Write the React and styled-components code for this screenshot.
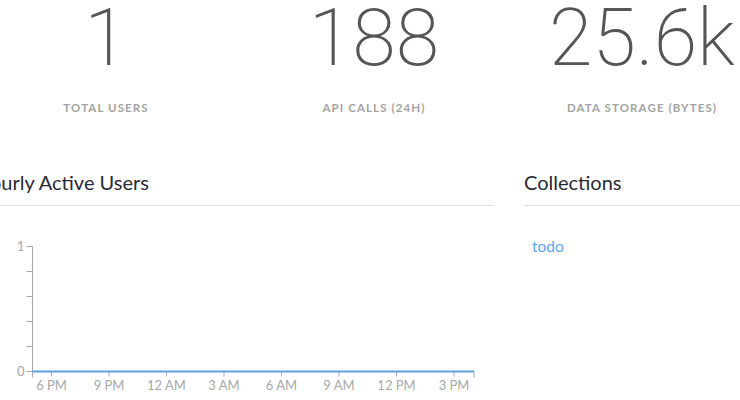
import React from 'react';
import styled, { createGlobalStyle } from 'styled-components';

const GlobalStyle = createGlobalStyle`
  html, body {
    margin: 0;
    padding: 0;
    background: #fff;
    overflow: hidden;
  }
  body {
    font-family: Lato, "Open Sans", Arial, sans-serif;
  }
`;

const Page = styled.div`
  width: 804px;
  margin-left: -28px;
`;

const StatsRow = styled.div`
  display: grid;
  grid-template-columns: repeat(3, 268px);
`;

const Stat = styled.div`
  text-align: center;
`;

const StatValue = styled.div`
  font-family: Roboto, "Open Sans", sans-serif;
  font-weight: 200;
  font-size: 79px;
  line-height: 76px;
  color: #555;
  white-space: nowrap;
`;

const StatLabel = styled.div`
  margin-top: 24px;
  font-size: 11.5px;
  line-height: 16px;
  font-weight: 700;
  letter-spacing: 1.1px;
  color: #a3a3a3;
  text-transform: uppercase;
`;

const Lower = styled.div`
  display: grid;
  grid-template-columns: 519px 252px;
  column-gap: 30px;
  margin: 54px 0 0 3px;
`;

const Panel = styled.section``;

const PanelTitle = styled.h2`
  margin: 0;
  padding: 0 0 11px;
  font-size: 20px;
  line-height: 24px;
  font-weight: 400;
  color: #2a2a36;
  border-bottom: 1px solid #dedede;
  white-space: nowrap;
`;

const CollectionList = styled.ul`
  list-style: none;
  margin: 30px 0 0;
  padding: 0 0 0 8px;
`;

const CollectionLink = styled.a`
  display: block;
  font-size: 15.5px;
  line-height: 20px;
  color: #5aa6f5;
  text-decoration: none;
`;

const ChartSvg = styled.svg`
  display: block;
  font-family: Lato, Arial, sans-serif;
`;

const hours = ['6 PM', '9 PM', '12 AM', '3 AM', '6 AM', '9 AM', '12 PM', '3 PM'];

const stats = [
  { value: '1', label: 'Total users' },
  { value: '188', label: 'API calls (24h)' },
  { value: '25.6k', label: 'Data storage (bytes)' },
];

function ActiveUsersChart() {
  const x0 = 57.5;
  const x1 = 499;
  const firstTick = 76.5;
  const step = 57.5;
  const yTop = 40.5;
  const yBottom = 165.5;
  const yTicks = [0, 1, 2, 3, 4, 5].map((i) => yTop + i * 25);
  return (
    <ChartSvg width="519" height="194" viewBox="0 0 519 194">
      <g stroke="#a9a9a9" strokeWidth="1" fill="none">
        <line x1={x0} y1={yTop} x2={x0} y2={yBottom} />
        {yTicks.map((y) => (
          <line key={y} x1={x0 - 6} y1={y} x2={x0} y2={y} />
        ))}
        <line x1={x0} y1={yBottom} x2={x0} y2={yBottom + 6} />
        {hours.map((h, i) => (
          <line key={h} x1={firstTick + i * step} y1={yBottom} x2={firstTick + i * step} y2={yBottom + 5} />
        ))}
        <line x1={x1} y1={yBottom} x2={x1} y2={yBottom + 6} />
      </g>
      <line x1={x0} y1={yBottom} x2={x1} y2={yBottom} stroke="#5ea1dc" strokeWidth="2" />
      <g fill="#a8a8a8" fontSize="13">
        <text x={x0 - 8} y={yTop + 4.5} textAnchor="end">1</text>
        <text x={x0 - 8} y={yBottom + 4.5} textAnchor="end">0</text>
        {hours.map((h, i) => (
          <text key={h} x={firstTick + i * step} y={yBottom + 18.5} textAnchor="middle">{h}</text>
        ))}
      </g>
    </ChartSvg>
  );
}

export default function App() {
  return (
    <>
      <GlobalStyle />
      <Page>
        <StatsRow>
          {stats.map((s) => (
            <Stat key={s.label}>
              <StatValue>{s.value}</StatValue>
              <StatLabel>{s.label}</StatLabel>
            </Stat>
          ))}
        </StatsRow>
        <Lower>
          <Panel>
            <PanelTitle>Hourly Active Users</PanelTitle>
            <ActiveUsersChart />
          </Panel>
          <Panel>
            <PanelTitle>Collections</PanelTitle>
            <CollectionList>
              <li>
                <CollectionLink href="#todo">todo</CollectionLink>
              </li>
            </CollectionList>
          </Panel>
        </Lower>
      </Page>
    </>
  );
}
